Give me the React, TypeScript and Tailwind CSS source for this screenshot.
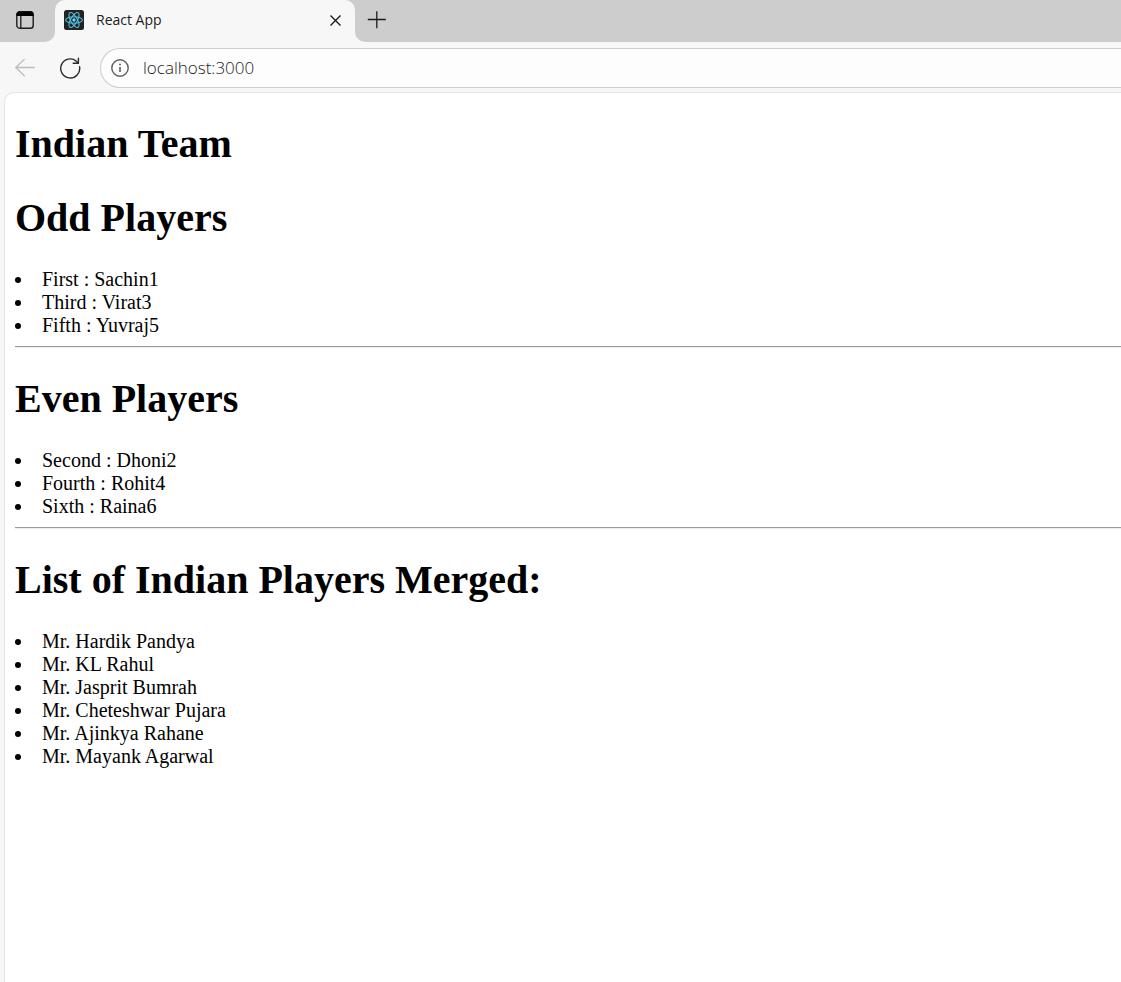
import React from "react";

const oddPlayers = ["First : Sachin1", "Third : Virat3", "Fifth : Yuvraj5"];
const evenPlayers = ["Second : Dhoni2", "Fourth : Rohit4", "Sixth : Raina6"];
const mergedPlayers = [
  "Mr. Hardik Pandya",
  "Mr. KL Rahul",
  "Mr. Jasprit Bumrah",
  "Mr. Cheteshwar Pujara",
  "Mr. Ajinkya Rahane",
  "Mr. Mayank Agarwal",
];

function ReactLogo() {
  return (
    <svg width="20" height="20" viewBox="0 0 20 20" fill="none" aria-hidden="true">
      <rect width="20" height="20" rx="2.5" fill="#222222" />
      <g stroke="#53c1de" strokeWidth="1.1">
        <ellipse cx="10" cy="10" rx="8.4" ry="3.3" />
        <ellipse cx="10" cy="10" rx="8.4" ry="3.3" transform="rotate(60 10 10)" />
        <ellipse cx="10" cy="10" rx="8.4" ry="3.3" transform="rotate(120 10 10)" />
      </g>
      <circle cx="10" cy="10" r="1.7" fill="#61dafb" />
    </svg>
  );
}

function TabStrip() {
  return (
    <div className="flex h-[42px]">
      <div className="flex w-[55px] shrink-0 items-center rounded-br-[10px] bg-[#cdcdcd] pl-4">
        <button type="button" aria-label="Tab actions" className="mb-[2px]">
          <svg width="18" height="18" viewBox="0 0 18 18" fill="none" aria-hidden="true">
            <rect x="0.8" y="0.8" width="16.4" height="16.4" rx="2.8" stroke="#1b1b1b" strokeWidth="1.4" />
            <path d="M0.5 5V3.4A3 3 0 0 1 3.4 0.5h11.2a3 3 0 0 1 2.9 2.9V5z" fill="#000" />
            <path d="M4.8 5v12" stroke="#1b1b1b" strokeWidth="1.3" />
          </svg>
        </button>
      </div>
      <div className="w-[300px] shrink-0 bg-[#cdcdcd]">
        <div className="flex h-full items-center rounded-t-[10px] bg-[#f7f7f7] pr-3 pb-[2px] pl-[9px]">
          <ReactLogo />
          <span className="ml-3 grow text-[14px] leading-5 text-[#1b1b1b]">React App</span>
          <button type="button" aria-label="Close tab" className="p-[2px]">
            <svg width="12" height="12" viewBox="0 0 12 12" fill="none" stroke="#1b1b1b" strokeWidth="1.4" aria-hidden="true">
              <path d="M1.5 1.5l10 10M11.5 1.5l-10 10" />
            </svg>
          </button>
        </div>
      </div>
      <div className="flex grow items-center rounded-bl-[10px] bg-[#cdcdcd] pb-[2px] pl-3">
        <button type="button" aria-label="New tab">
          <svg width="19" height="18" viewBox="0 0 19 18" fill="none" stroke="#1b1b1b" strokeWidth="1.3" aria-hidden="true">
            <path d="M0.8 8.5h18M9.8 0.3v17" />
          </svg>
        </button>
      </div>
    </div>
  );
}

function AddressBar() {
  return (
    <div className="flex items-center pt-[6px] pb-1 pl-[15px]">
      <button type="button" aria-label="Back" disabled>
        <svg width="20" height="18" viewBox="0 0 20 18" fill="none" stroke="#bdbdbd" strokeWidth="1.3" strokeLinecap="round" aria-hidden="true">
          <path d="M19.3 8.5H0.8M9.3 0.3L0.8 8.5l8.5 8.2" />
        </svg>
      </button>
      <button type="button" aria-label="Refresh" className="ml-6">
        <svg width="22" height="22" viewBox="0 0 22 22" fill="none" stroke="#2b2b2b" strokeWidth="1.4" strokeLinecap="round" strokeLinejoin="round" aria-hidden="true">
          <path d="M20.6 9.8A9.5 9.5 0 1 1 17.4 4.2L19.2 6.2" />
          <path d="M19.4 1.2V6.3H14.2" />
        </svg>
      </button>
      <div className="ml-[19px] flex h-10 grow items-center rounded-l-full border border-r-0 border-[#cdcdcd] bg-[#fdfdfd] pl-[10px]">
        <svg width="18" height="18" viewBox="0 0 18 18" fill="none" stroke="#5c5c5c" strokeWidth="1.4" aria-hidden="true">
          <circle cx="9" cy="9" r="8.2" />
          <path d="M9 8v5" strokeWidth="1.6" />
          <circle cx="9" cy="5.4" r="1" fill="#5c5c5c" stroke="none" />
        </svg>
        <input
          type="text"
          aria-label="Address"
          defaultValue="localhost:3000"
          className="ml-[14px] min-w-0 grow bg-transparent text-[17px] leading-6 font-light text-[#1b1b1b] outline-none"
        />
      </div>
    </div>
  );
}

function Heading({ children }: { children: React.ReactNode }) {
  return <h1 className="mb-[27px] text-[40px] leading-[47px] font-bold">{children}</h1>;
}

function PlayerList({ players }: { players: string[] }) {
  return (
    <ul className="list-inside list-disc">
      {players.map((player) => (
        <li key={player}>{player}</li>
      ))}
    </ul>
  );
}

function Divider() {
  return <hr className="mt-[9px] mb-[27px] h-[2px] border-t border-b border-t-[#9a9a9a] border-b-[#eeeeee]" />;
}

export default function App() {
  return (
    <div className="flex min-h-screen flex-col bg-[#f7f7f7]">
      <header className="font-['Open_Sans',sans-serif]">
        <TabStrip />
        <AddressBar />
      </header>
      <main className="ml-1 grow rounded-tl-[10px] border-t border-l border-[#e5e5e5] bg-white pt-[27px] pb-4 pl-[10px] font-['Liberation_Serif',serif] text-[20px] leading-[23px] text-black">
        <Heading>Indian Team</Heading>
        <Heading>Odd Players</Heading>
        <PlayerList players={oddPlayers} />
        <Divider />
        <Heading>Even Players</Heading>
        <PlayerList players={evenPlayers} />
        <Divider />
        <Heading>List of Indian Players Merged:</Heading>
        <PlayerList players={mergedPlayers} />
      </main>
    </div>
  );
}
